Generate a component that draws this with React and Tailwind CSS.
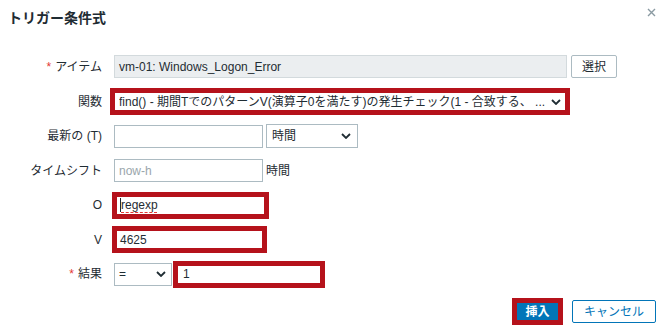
import React from "react";

const font = { fontFamily: '"Liberation Sans", "Noto Sans CJK JP", sans-serif' };

function Chevron() {
    return (
        <svg width="10" height="6" viewBox="0 0 10 6" className="shrink-0">
            <polyline points="1,1 5,5 9,1" fill="none" stroke="#1f2c33" strokeWidth="1.8" />
        </svg>
    );
}

function Label({ children, required }) {
    return (
        <div className="w-[103px] shrink-0 text-right pr-[1px] text-[12px] text-[#1f2c33]">
            {required && <span className="text-[#e33734] mr-[4px]">*</span>}
            {children}
        </div>
    );
}

function Row({ h, label, required, children }) {
    return (
        <div className={`flex items-center ${h}`}>
            <Label required={required}>{label}</Label>
            <div className="flex items-center ml-[11px]">{children}</div>
        </div>
    );
}

function RedBox({ className, children }) {
    return (
        <div className={`border-[5px] border-[#b5121b] bg-white flex items-center text-[12px] text-[#1f2c33] ${className}`}>
            {children}
        </div>
    );
}

export default function App() {
    return (
        <div className="w-[662px] h-[331px] bg-white overflow-hidden" style={font}>
            <div className="flex justify-between items-start h-[49px]">
                <div className="pl-[8px] pt-[9px] text-[14px] font-bold text-[#1f2c33] leading-[18px]">トリガー条件式</div>
                <svg width="9" height="9" viewBox="0 0 9 9" className="mt-[8px] mr-[6px]">
                    <path d="M1 1 L8 8 M8 1 L1 8" stroke="#8a9aa2" strokeWidth="1.4" />
                </svg>
            </div>

            <Row h="h-[35px]" label="アイテム" required>
                <div className="w-[453px] h-[23px] border border-[#d3dadd] bg-[#ebeef0] flex items-center pl-[4px] text-[12px] text-[#1f2c33]">
                    vm-01: Windows_Logon_Error
                </div>
                <button className="ml-[4px] w-[46px] h-[23px] border border-[#acbbc2] rounded-[2px] bg-white text-[12px] text-[#1f2c33]">選択</button>
            </Row>

            <Row h="h-[35px]" label="関数">
                <RedBox className="-ml-[4px] w-[460px] h-[27px] pl-[4px] pr-[4px] justify-between">
                    <span className="whitespace-nowrap overflow-hidden">find() - 期間TでのパターンV(演算子0を満たす)の発生チェック(1 - 合致する、 ...</span>
                    <Chevron />
                </RedBox>
            </Row>

            <Row h="h-[34px]" label="最新の (T)">
                <div className="w-[149px] h-[23px] border border-[#acbbc2] bg-white" />
                <div className="ml-[3px] w-[92px] h-[24px] border border-[#acbbc2] bg-white flex items-center justify-between pl-[5px] pr-[6px] text-[12px] text-[#1f2c33]">
                    <span>時間</span>
                    <Chevron />
                </div>
            </Row>

            <Row h="h-[35px]" label="タイムシフト">
                <div className="w-[149px] h-[23px] border border-[#acbbc2] bg-white flex items-center pl-[4px] text-[12px] text-[#9aa6ac]">now-h</div>
                <span className="ml-[3px] text-[12px] text-[#1f2c33]">時間</span>
            </Row>

            <Row h="h-[34px]" label="O">
                <RedBox className="-ml-[2px] w-[157px] h-[27px] pl-[3px]">
                    <span className="w-[1px] h-[14px] bg-[#1f2c33]" />
                    <span className="underline decoration-dashed decoration-[#e33734] underline-offset-[3px]">regexp</span>
                </RedBox>
            </Row>

            <Row h="h-[35px]" label="V">
                <RedBox className="-ml-[2px] w-[155px] h-[27px] pl-[3px]">4625</RedBox>
            </Row>

            <Row h="h-[34px]" label="結果" required>
                <div className="w-[58px] h-[23px] border border-[#acbbc2] bg-white flex items-center justify-between pl-[4px] pr-[5px] text-[12px] text-[#1f2c33]">
                    <span>=</span>
                    <Chevron />
                </div>
                <RedBox className="ml-[1px] w-[152px] h-[27px] pl-[5px]">1</RedBox>
            </Row>

            <div className="flex justify-end items-center gap-[9px] pr-[6px] pt-[7px]">
                <div className="w-[51px] h-[27px] border-[5px] border-[#b5121b] bg-[#0275b8] flex items-center justify-center text-[12px] font-bold text-white">挿入</div>
                <button className="w-[84px] h-[23px] border border-[#0275b8] rounded-[2px] bg-white text-[12px] text-[#0275b8]">キャンセル</button>
            </div>
        </div>
    );
}
